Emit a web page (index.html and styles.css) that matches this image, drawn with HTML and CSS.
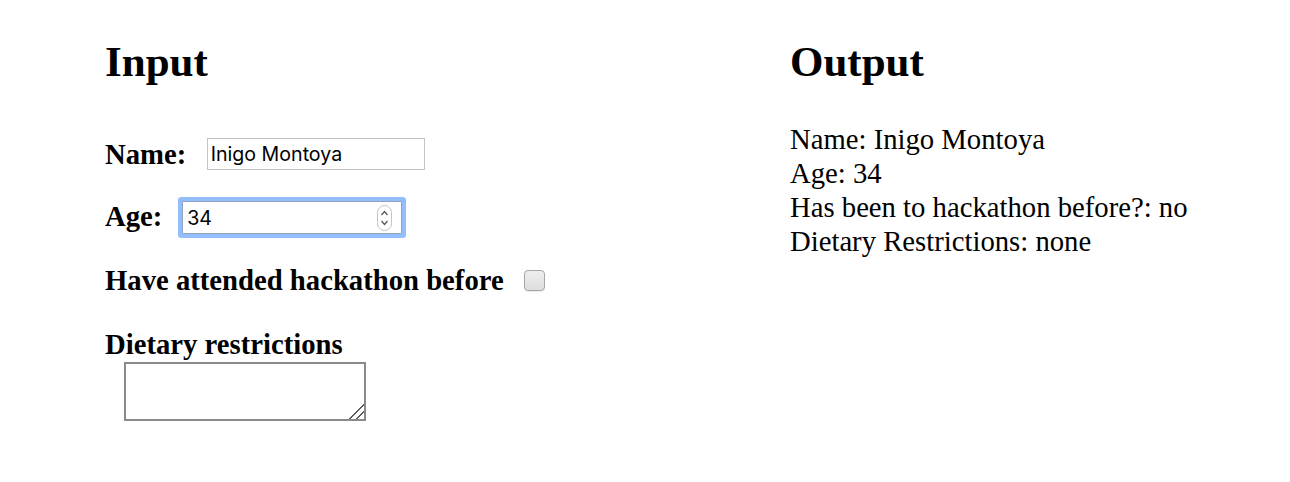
FILE: index.html
```html
<!DOCTYPE html>
<html>
<head>
<meta charset="utf-8">
<link rel="stylesheet" href="styles.css">
</head>
<body>
<div class="page">
  <section class="col">
    <h2 class="title">Input</h2>
    <div class="form">
      <div class="row">
        <label class="lbl lbl-name">Name:</label>
        <input class="txt txt-name" type="text" value="Inigo Montoya">
      </div>
      <div class="row row-age">
        <label class="lbl lbl-age">Age:</label>
        <span class="num-wrap">
          <input class="txt txt-age" type="number" value="34">
          <svg class="spinner" width="15" height="26" viewBox="0 0 15 26">
            <rect x="0.5" y="0.5" width="14" height="25" rx="7" ry="7" fill="#fff" stroke="#c4c4c4"/>
            <path d="M4.5 10 L7.5 6.5 L10.5 10" fill="none" stroke="#555" stroke-width="1.2"/>
            <path d="M4.5 16 L7.5 19.5 L10.5 16" fill="none" stroke="#555" stroke-width="1.2"/>
          </svg>
        </span>
      </div>
      <div class="row row-chk">
        <label class="lbl">Have attended hackathon before</label>
        <input class="chk" type="checkbox">
      </div>
      <div class="diet">
        <label class="lbl lbl-block">Dietary restrictions</label>
        <textarea class="area"></textarea>
      </div>
    </div>
  </section>
  <section class="col">
    <h2 class="title">Output</h2>
    <div class="out">
      <div>Name: Inigo Montoya</div>
      <div>Age: 34</div>
      <div>Has been to hackathon before?: no</div>
      <div>Dietary Restrictions: none</div>
    </div>
  </section>
</div>
</body>
</html>
```

FILE: styles.css
```css
html, body {
  margin: 0;
  padding: 0;
  background: #fff;
}
body {
  font-family: "Liberation Serif", "Times New Roman", serif;
  color: #000;
}
.page {
  display: grid;
  grid-template-columns: 685px 1fr;
  padding: 36.5px 0 0 105px;
}
.title {
  margin: 0;
  font-size: 43px;
  line-height: 50px;
  font-weight: bold;
}
.form {
  margin-top: 50.8px;
  display: flex;
  flex-direction: column;
}
.row {
  display: flex;
  align-items: flex-start;
}
.row-age { margin-top: 27.5px; }
.row-chk { margin-top: 28.5px; }
.lbl {
  font-size: 28.7px;
  line-height: 34px;
  font-weight: bold;
}
.lbl-name { margin-right: 20.5px; }
.lbl-age { margin-right: 19.8px; }
.txt {
  box-sizing: border-box;
  font-family: Inter, "Liberation Sans", sans-serif;
  font-size: 19.6px;
  color: #000;
  outline: none;
  margin: 0;
}
.txt-name {
  width: 218px;
  height: 32px;
  margin-top: 0.7px;
  border: 1px solid #c2c2c2;
  border-radius: 0;
  padding: 0 3px;
}
.num-wrap {
  position: relative;
  display: block;
  margin-top: 2.7px;
}
.txt-age {
  display: block;
  width: 220px;
  height: 33px;
  border: 1px solid #8fa2c4;
  border-radius: 1px;
  padding: 0 3px 0 4px;
  box-shadow: 0 0 0 4px #93befb;
  -moz-appearance: textfield;
}
.txt-age::-webkit-inner-spin-button,
.txt-age::-webkit-outer-spin-button {
  -webkit-appearance: none;
  margin: 0;
}
.spinner {
  position: absolute;
  right: 10px;
  top: 3.5px;
}
.chk {
  -webkit-appearance: none;
  appearance: none;
  box-sizing: border-box;
  width: 21px;
  height: 21px;
  margin: 7px 0 0 20.7px;
  border: 1px solid #a6a6a6;
  border-radius: 4px;
  background: linear-gradient(#eeeeee, #dedede);
  box-shadow: 0 1px 1px rgba(0, 0, 0, 0.08);
}
.diet {
  display: flex;
  flex-direction: column;
  align-items: flex-start;
  margin-top: 30.5px;
}
.lbl-block {
  display: block;
}
.area {
  box-sizing: border-box;
  width: 242px;
  height: 59px;
  margin: 0.7px 0 0 19px;
  border: 2px solid #8a8a8a;
  border-radius: 0;
  padding: 2px;
  background: #fff;
  outline: none;
}
.area::-webkit-resizer {
  background: linear-gradient(135deg,
    transparent 0 48%, #5a5a5a 48% 56%, transparent 56% 72%,
    #5a5a5a 72% 80%, transparent 80% 100%);
}
.out {
  margin-top: 35.8px;
  font-size: 28.7px;
  line-height: 34px;
}
```
